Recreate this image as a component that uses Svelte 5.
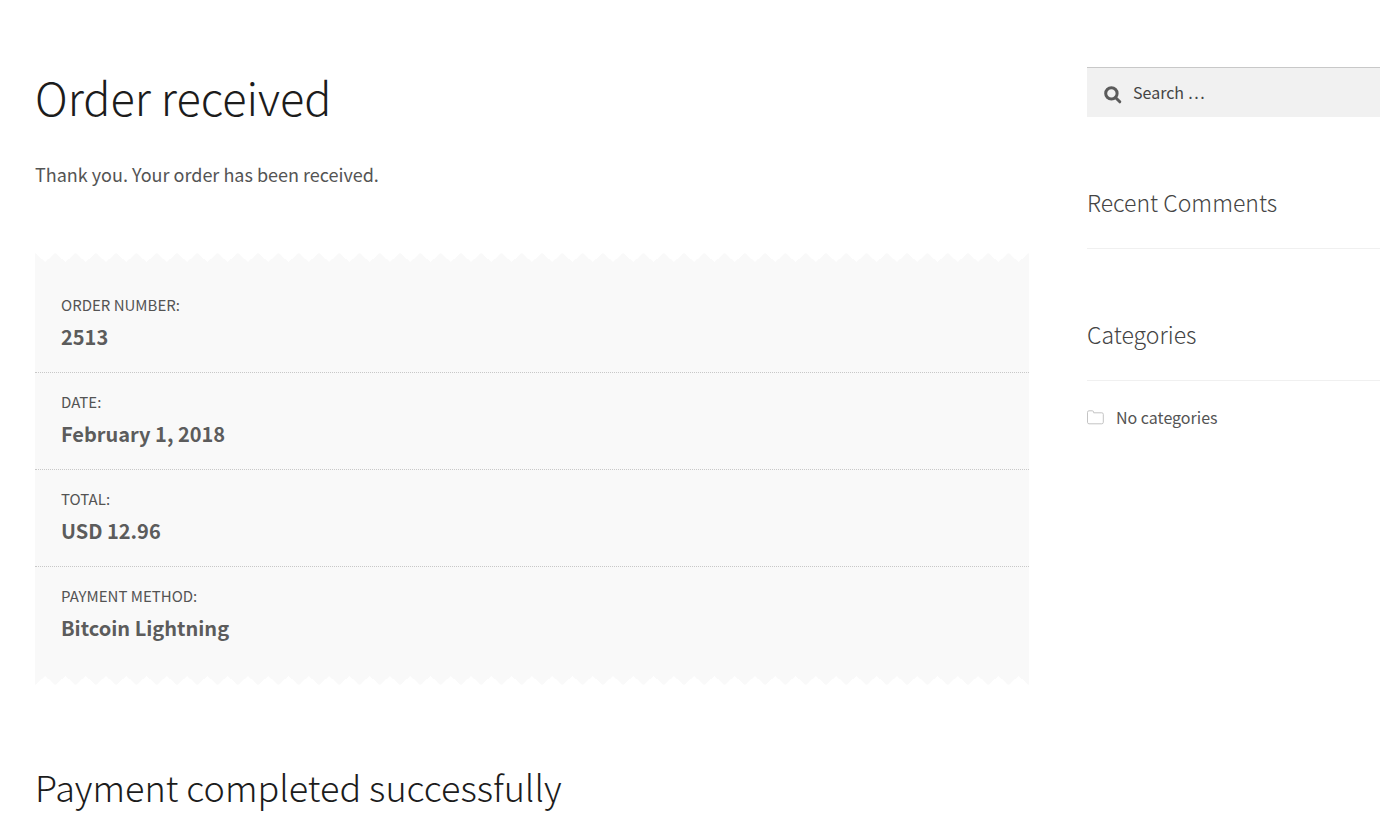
<script>
  const details = [
    { label: 'Order number:', value: '2513' },
    { label: 'Date:', value: 'February 1, 2018' },
    { label: 'Total:', value: 'USD 12.96' },
    { label: 'Payment method:', value: 'Bitcoin Lightning' }
  ];
</script>

<div class="page">
  <main>
    <h1>Order received</h1>
    <p class="thanks">Thank you. Your order has been received.</p>
    <ul class="receipt">
      {#each details as item}
        <li>
          <span class="label">{item.label}</span>
          <strong>{item.value}</strong>
        </li>
      {/each}
    </ul>
    <h2>Payment completed successfully</h2>
  </main>

  <aside>
    <form class="search" role="search">
      <svg viewBox="0 0 18 18" aria-hidden="true">
        <circle cx="7.4" cy="7.4" r="5.7" />
        <path d="M11.7 11.7 15.8 15.8" />
      </svg>
      <input type="search" placeholder="Search …" aria-label="Search" />
    </form>
    <section>
      <h3>Recent Comments</h3>
    </section>
    <section>
      <h3>Categories</h3>
      <ul class="categories">
        <li>
          <svg viewBox="0 0 17 15" aria-hidden="true">
            <path d="M.5 12.2V2.3Q.5.8 2 .8H5.2Q6.6.8 6.6 2.2V2.8H14.8Q16.3 2.8 16.3 4.3V12.2Q16.3 13.8 14.8 13.8H2Q.5 13.8.5 12.2Z" />
          </svg>
          No categories
        </li>
      </ul>
    </section>
  </aside>
</div>

<style>
  :global(body) {
    margin: 0;
    background: #fff;
    color: #545454;
    font-family: 'Source Sans Pro', 'Noto Sans CJK SC', 'Noto Sans', sans-serif;
  }
  .page {
    display: grid;
    grid-template-columns: minmax(0, 994fr) minmax(0, 293fr);
    gap: 58px;
    padding: 67px 20px 0 35px;
  }
  h1, h2, h3, p, ul {
    margin: 0;
    padding: 0;
    font-weight: 300;
  }
  ul {
    list-style: none;
  }
  h1 {
    color: #1c1c1c;
    font-size: 45px;
    line-height: 60px;
  }
  .thanks {
    margin-top: 31px;
    font-size: 18px;
    line-height: 32px;
    font-weight: 400;
  }
  /* Paper slip with torn edges along the top and bottom */
  .receipt {
    --tooth: calc(100% / 49);
    margin-top: 63px;
    padding: 23px 0 22px;
    background:
      linear-gradient(#f9f9f9, #f9f9f9) 0 9px / 100% calc(100% - 18px) no-repeat,
      conic-gradient(from -48deg at 50% 100%, transparent 96deg, #f9f9f9 97deg 359deg, transparent) 0 0 / var(--tooth) 9px repeat-x,
      conic-gradient(from 132deg at 50% 0, transparent 96deg, #f9f9f9 97deg 359deg, transparent) 0 100% / var(--tooth) 9px repeat-x;
  }
  .receipt li {
    padding: 17px 26px 19px;
    border-bottom: 1px dotted #c8c8c8;
    font-weight: 400;
  }
  .receipt li:last-child {
    border-bottom: 0;
  }
  .label {
    display: block;
    margin-bottom: 4px;
    font-size: 15px;
    line-height: 24px;
    text-transform: uppercase;
  }
  strong {
    display: block;
    color: #5c5c5c;
    font-size: 20px;
    line-height: 32px;
    font-weight: 700;
  }
  h2 {
    margin-top: 73px;
    color: #1c1c1c;
    font-size: 36px;
    line-height: 56px;
  }
  .search {
    display: flex;
    align-items: center;
    gap: 11px;
    padding: 0 17px;
    background: #f1f1f1;
    border-top: 1px solid #c8c8c8;
  }
  .search svg {
    flex: none;
    width: 18px;
    height: 18px;
    margin-top: 4px;
    fill: none;
    stroke: #5b5b5b;
    stroke-width: 3;
    stroke-linecap: round;
  }
  input {
    flex: 1;
    min-width: 0;
    box-sizing: border-box;
    height: 49px;
    padding: 0 0 2px;
    border: 0;
    outline: 0;
    background: none;
    color: #444;
    font: 400 16px/24px 'Source Sans Pro', 'Noto Sans CJK SC', 'Noto Sans', sans-serif;
  }
  input::placeholder {
    color: #444;
    opacity: 1;
  }
  section {
    margin-top: 67px;
  }
  h3 {
    padding-bottom: 28px;
    border-bottom: 1px solid #f0f0f0;
    color: #444;
    font-size: 23px;
    line-height: 36px;
  }
  .categories li {
    display: flex;
    align-items: center;
    gap: 12px;
    margin-top: 24px;
    font-size: 16px;
    line-height: 24px;
    font-weight: 400;
  }
  .categories svg {
    width: 17px;
    height: 15px;
    fill: none;
    stroke: #c4c4c4;
  }
</style>
